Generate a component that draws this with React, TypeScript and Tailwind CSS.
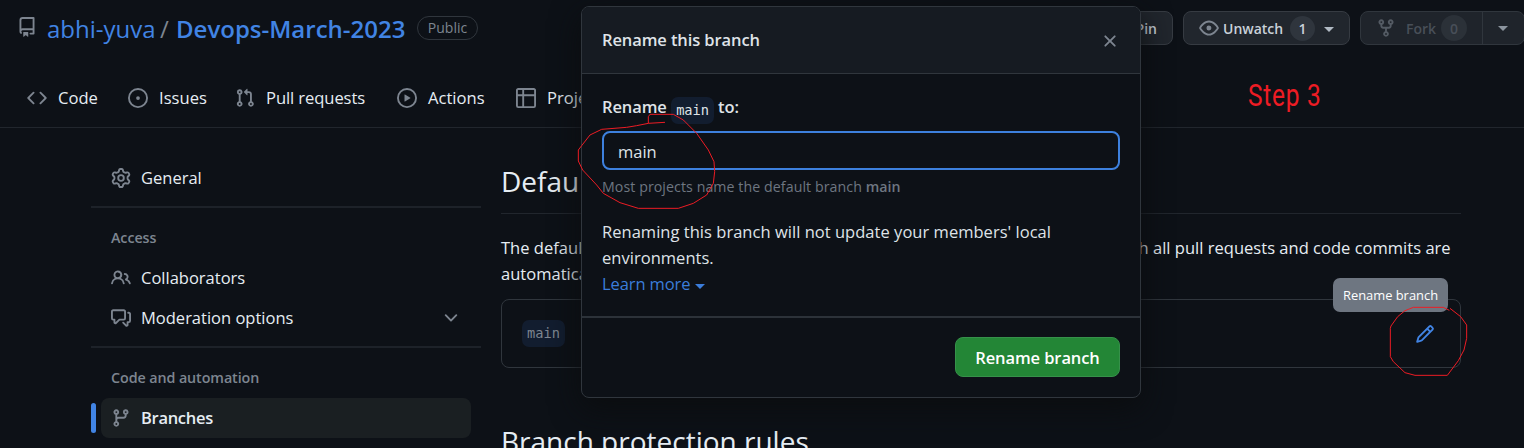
import type { ReactNode } from 'react';

const ICONS = {
  repo: 'M2 2.5A2.5 2.5 0 0 1 4.5 0h8.75a.75.75 0 0 1 .75.75v12.5a.75.75 0 0 1-.75.75h-2.5a.75.75 0 0 1 0-1.5h1.75v-2h-8a1 1 0 0 0-.714 1.7.75.75 0 1 1-1.072 1.05A2.495 2.495 0 0 1 2 11.5Zm10.5-1h-8a1 1 0 0 0-1 1v6.708A2.486 2.486 0 0 1 4.5 9h8ZM5 12.25a.25.25 0 0 1 .25-.25h3.5a.25.25 0 0 1 .25.25v3.25a.25.25 0 0 1-.4.2l-1.45-1.087a.249.249 0 0 0-.3 0L5.4 15.7a.25.25 0 0 1-.4-.2Z',
  code: 'm11.28 3.22 4.25 4.25a.75.75 0 0 1 0 1.06l-4.25 4.25a.749.749 0 0 1-1.275-.326.749.749 0 0 1 .215-.734L13.94 8l-3.72-3.72a.749.749 0 0 1 .326-1.275.749.749 0 0 1 .734.215Zm-6.56 0a.751.751 0 0 1 1.042.018.751.751 0 0 1 .018 1.042L2.06 8l3.72 3.72a.749.749 0 0 1-.326 1.275.749.749 0 0 1-.734-.215L.47 8.53a.75.75 0 0 1 0-1.06Z',
  issue: 'M8 9.5a1.5 1.5 0 1 0 0-3 1.5 1.5 0 0 0 0 3ZM8 0a8 8 0 1 1 0 16A8 8 0 0 1 8 0ZM1.5 8a6.5 6.5 0 1 0 13 0 6.5 6.5 0 0 0-13 0Z',
  pull: 'M1.5 3.25a2.25 2.25 0 1 1 3 2.122v5.256a2.251 2.251 0 1 1-1.5 0V5.372A2.25 2.25 0 0 1 1.5 3.25Zm5.677-.177L9.573.677A.25.25 0 0 1 10 .854V2.5h1A2.5 2.5 0 0 1 13.5 5v5.628a2.251 2.251 0 1 1-1.5 0V5a1 1 0 0 0-1-1h-1v1.646a.25.25 0 0 1-.427.177L7.177 3.427a.25.25 0 0 1 0-.354ZM3.75 2.5a.75.75 0 1 0 0 1.5.75.75 0 0 0 0-1.5Zm0 9.5a.75.75 0 1 0 0 1.5.75.75 0 0 0 0-1.5Zm8.25.75a.75.75 0 1 0 1.5 0 .75.75 0 0 0-1.5 0Z',
  play: 'M8 0a8 8 0 1 1 0 16A8 8 0 0 1 8 0ZM1.5 8a6.5 6.5 0 1 0 13 0 6.5 6.5 0 0 0-13 0Zm4.879-2.773 4.264 2.559a.25.25 0 0 1 0 .428l-4.264 2.559A.25.25 0 0 1 6 10.559V5.442a.25.25 0 0 1 .379-.215Z',
  table: 'M0 1.75C0 .784.784 0 1.75 0h12.5C15.216 0 16 .784 16 1.75v12.5A1.75 1.75 0 0 1 14.25 16H1.75A1.75 1.75 0 0 1 0 14.25ZM6.5 6.5v8h7.75a.25.25 0 0 0 .25-.25V6.5Zm8-1.5V1.75a.25.25 0 0 0-.25-.25H6.5V5Zm-13 1.5v7.75c0 .138.112.25.25.25H5v-8ZM5 5V1.5H1.75a.25.25 0 0 0-.25.25V5Z',
  eye: 'M8 2c1.981 0 3.671.992 4.933 2.078 1.27 1.091 2.187 2.345 2.637 3.023a1.62 1.62 0 0 1 0 1.798c-.45.678-1.367 1.932-2.637 3.023C11.67 13.008 9.981 14 8 14c-1.981 0-3.671-.992-4.933-2.078C1.797 10.83.88 9.576.43 8.898a1.62 1.62 0 0 1 0-1.798c.45-.677 1.367-1.931 2.637-3.022C4.33 2.992 6.019 2 8 2ZM1.679 7.932a.12.12 0 0 0 0 .136c.411.622 1.241 1.75 2.366 2.717C5.176 11.758 6.527 12.5 8 12.5c1.473 0 2.825-.742 3.955-1.715 1.124-.967 1.954-2.096 2.366-2.717a.12.12 0 0 0 0-.136c-.412-.621-1.242-1.75-2.366-2.717C10.824 4.242 9.473 3.5 8 3.5c-1.473 0-2.825.742-3.955 1.715-1.124.967-1.954 2.096-2.366 2.717ZM8 10a2 2 0 1 1-.001-3.999A2 2 0 0 1 8 10Z',
  fork: 'M5 5.372v.878c0 .414.336.75.75.75h4.5a.75.75 0 0 0 .75-.75v-.878a2.25 2.25 0 1 1 1.5 0v.878a2.25 2.25 0 0 1-2.25 2.25h-1.5v2.128a2.251 2.251 0 1 1-1.5 0V8.5h-1.5A2.25 2.25 0 0 1 3.5 6.25v-.878a2.25 2.25 0 1 1 1.5 0ZM5 3.25a.75.75 0 1 0-1.5 0 .75.75 0 0 0 1.5 0Zm6.75.75a.75.75 0 1 0 0-1.5.75.75 0 0 0 0 1.5Zm-3 8.75a.75.75 0 1 0-1.5 0 .75.75 0 0 0 1.5 0Z',
  gear: 'M8 0a8.2 8.2 0 0 1 .701.031C9.444.095 9.99.645 10.16 1.29l.288 1.107c.018.066.079.158.212.224.231.114.454.243.668.386.123.082.233.09.299.071l1.103-.303c.644-.176 1.392.021 1.82.63.27.385.506.792.704 1.218.315.675.111 1.422-.364 1.891l-.814.806c-.049.048-.098.147-.088.294.016.257.016.515 0 .772-.01.147.038.246.088.294l.814.806c.475.469.679 1.216.364 1.891a7.977 7.977 0 0 1-.704 1.217c-.428.61-1.176.807-1.82.63l-1.102-.302c-.067-.019-.177-.011-.3.071a5.909 5.909 0 0 1-.668.386c-.133.066-.194.158-.211.224l-.29 1.106c-.168.646-.715 1.196-1.458 1.26a8.006 8.006 0 0 1-1.402 0c-.743-.064-1.289-.614-1.458-1.26l-.289-1.106c-.018-.066-.079-.158-.212-.224a5.738 5.738 0 0 1-.668-.386c-.123-.082-.233-.09-.299-.071l-1.103.303c-.644.176-1.392-.021-1.82-.63a8.12 8.12 0 0 1-.704-1.218c-.315-.675-.111-1.422.363-1.891l.815-.806c.05-.048.098-.147.088-.294a6.214 6.214 0 0 1 0-.772c.01-.147-.038-.246-.088-.294l-.815-.806C.635 6.045.431 5.298.746 4.623a7.92 7.92 0 0 1 .704-1.217c.428-.61 1.176-.807 1.82-.63l1.102.302c.067.019.177.011.3-.071.214-.143.437-.272.668-.386.133-.066.194-.158.211-.224l.29-1.106C6.009.645 6.556.095 7.299.03 7.53.01 7.764 0 8 0Zm-.571 1.525c-.036.003-.108.036-.137.146l-.289 1.105c-.147.561-.549.967-.998 1.189-.173.086-.34.183-.5.29-.417.278-.97.423-1.529.27l-1.103-.303c-.109-.03-.175.016-.195.045-.22.312-.412.644-.573.99-.014.031-.021.11.059.19l.815.806c.411.406.562.957.53 1.456a4.709 4.709 0 0 0 0 .582c.032.499-.119 1.05-.53 1.456l-.815.806c-.081.08-.073.159-.059.19.162.346.353.677.573.989.02.03.085.076.195.046l1.102-.303c.56-.153 1.113-.008 1.53.27.161.107.328.204.501.29.447.222.85.629.997 1.189l.289 1.105c.029.109.101.143.137.146a6.6 6.6 0 0 0 1.142 0c.036-.003.108-.036.137-.146l.289-1.105c.147-.561.549-.967.998-1.189.173-.086.34-.183.5-.29.417-.278.97-.423 1.529-.27l1.103.303c.109.029.175-.016.195-.045.22-.313.411-.644.573-.99.014-.031.021-.11-.059-.19l-.815-.806c-.411-.406-.562-.957-.53-1.456a4.709 4.709 0 0 0 0-.582c-.032-.499.119-1.05.53-1.456l.815-.806c.081-.08.073-.159.059-.19a6.464 6.464 0 0 0-.573-.989c-.02-.03-.085-.076-.195-.046l-1.102.303c-.56.153-1.113.008-1.53-.27a4.44 4.44 0 0 0-.501-.29c-.447-.222-.85-.629-.997-1.189l-.289-1.105c-.029-.11-.101-.143-.137-.146a6.6 6.6 0 0 0-1.142 0ZM11 8a3 3 0 1 1-6 0 3 3 0 0 1 6 0ZM9.5 8a1.5 1.5 0 1 0-3.001.001A1.5 1.5 0 0 0 9.5 8Z',
  people: 'M2 5.5a3.5 3.5 0 1 1 5.898 2.549 5.508 5.508 0 0 1 3.034 4.084.75.75 0 1 1-1.482.235 4 4 0 0 0-7.9 0 .75.75 0 0 1-1.482-.236A5.507 5.507 0 0 1 3.102 8.05 3.493 3.493 0 0 1 2 5.5ZM11 4a3.001 3.001 0 0 1 2.22 5.018 5.01 5.01 0 0 1 2.56 3.012.749.749 0 0 1-.885.954.752.752 0 0 1-.549-.514 3.507 3.507 0 0 0-2.522-2.372.75.75 0 0 1-.574-.73v-.352a.75.75 0 0 1 .416-.672A1.5 1.5 0 0 0 11 5.5.75.75 0 0 1 11 4Zm-5.5-.5a2 2 0 1 0-.001 3.999A2 2 0 0 0 5.5 3.5Z',
  discussion: 'M1.75 1h8.5c.966 0 1.75.784 1.75 1.75v5.5A1.75 1.75 0 0 1 10.25 10H7.061l-2.574 2.573A1.458 1.458 0 0 1 2 11.543V10h-.25A1.75 1.75 0 0 1 0 8.25v-5.5C0 1.784.784 1 1.75 1ZM1.5 2.75v5.5c0 .138.112.25.25.25h1a.75.75 0 0 1 .75.75v2.19l2.72-2.72a.749.749 0 0 1 .53-.22h3.5a.25.25 0 0 0 .25-.25v-5.5a.25.25 0 0 0-.25-.25h-8.5a.25.25 0 0 0-.25.25Zm13 2a.25.25 0 0 0-.25-.25h-.5a.75.75 0 0 1 0-1.5h.5c.966 0 1.75.784 1.75 1.75v5.5A1.75 1.75 0 0 1 14.25 12H14v1.543a1.458 1.458 0 0 1-2.487 1.03L9.22 12.28a.749.749 0 0 1 .326-1.275.749.749 0 0 1 .734.215l2.22 2.22v-2.19a.75.75 0 0 1 .75-.75h1a.25.25 0 0 0 .25-.25Z',
  chevron: 'M12.78 5.22a.749.749 0 0 1 0 1.06l-4.25 4.25a.749.749 0 0 1-1.06 0L3.22 6.28a.749.749 0 1 1 1.06-1.06L8 8.939l3.72-3.719a.749.749 0 0 1 1.06 0Z',
  branch: 'M9.5 3.25a2.25 2.25 0 1 1 3 2.122V6A2.5 2.5 0 0 1 10 8.5H6a1 1 0 0 0-1 1v1.128a2.251 2.251 0 1 1-1.5 0V5.372a2.25 2.25 0 1 1 1.5 0v1.836A2.493 2.493 0 0 1 6 7h4a1 1 0 0 0 1-1v-.628A2.25 2.25 0 0 1 9.5 3.25Zm-6 0a.75.75 0 1 0 1.5 0 .75.75 0 0 0-1.5 0Zm8.25-.75a.75.75 0 1 0 0 1.5.75.75 0 0 0 0-1.5ZM4.25 12a.75.75 0 1 0 0 1.5.75.75 0 0 0 0-1.5Z',
  pencil: 'M11.013 1.427a1.75 1.75 0 0 1 2.474 0l1.086 1.086a1.75 1.75 0 0 1 0 2.474l-8.61 8.61c-.21.21-.47.364-.756.445l-3.251.93a.75.75 0 0 1-.927-.928l.929-3.25c.081-.286.235-.547.445-.758l8.61-8.61Zm.176 4.823L9.75 4.81l-6.286 6.287a.253.253 0 0 0-.064.108l-.558 1.953 1.953-.558a.253.253 0 0 0 .108-.064Zm1.238-3.763a.25.25 0 0 0-.354 0L10.811 3.75l1.439 1.44 1.263-1.263a.25.25 0 0 0 0-.354Z',
  close: 'M3.72 3.72a.75.75 0 0 1 1.06 0L8 6.94l3.22-3.22a.749.749 0 0 1 1.275.326.749.749 0 0 1-.215.734L9.06 8l3.22 3.22a.749.749 0 0 1-.326 1.275.749.749 0 0 1-.734-.215L8 9.06l-3.22 3.22a.751.751 0 0 1-1.042-.018.751.751 0 0 1-.018-1.042L6.94 8 3.72 4.78a.75.75 0 0 1 0-1.06Z',
};

type IconName = keyof typeof ICONS;

function Icon({ name, className = 'text-[#7d8590]' }: { name: IconName; className?: string }) {
  return (
    <svg viewBox="0 0 16 16" className={`size-5 shrink-0 fill-current ${className}`} aria-hidden="true">
      <path d={ICONS[name]} />
    </svg>
  );
}

function Caret({ className = '' }: { className?: string }) {
  return (
    <svg viewBox="0 0 10 5" className={`h-[5px] w-[10px] shrink-0 fill-current ${className}`} aria-hidden="true">
      <path d="M0 0h10L5 5z" />
    </svg>
  );
}

function NavItem({ icon, label, className }: { icon: IconName; label: string; className: string }) {
  return (
    <a className={`flex shrink-0 items-center gap-[11px] ${className}`}>
      <Icon name={icon} />
      <span className="pt-px whitespace-nowrap">{label}</span>
    </a>
  );
}

function SideItem({ icon, label, children }: { icon: IconName; label: string; children?: ReactNode }) {
  return (
    <div className="flex h-10 items-center gap-2.5 pr-5 pl-5">
      <Icon name={icon} />
      <span className="grow">{label}</span>
      {children}
    </div>
  );
}

function SideHeading({ children }: { children: ReactNode }) {
  return (
    <div className="flex h-10 items-center pl-5 text-[14.3px] font-semibold tracking-[-0.08px] text-[#7d8590]">
      {children}
    </div>
  );
}

function BranchName({ className }: { className: string }) {
  return (
    <code
      className={`inline-flex h-[27px] w-[43px] items-center justify-center rounded-[7px] bg-[#121d2f] font-['DejaVu_Sans_Mono',monospace] text-[13.7px] font-normal ${className}`}
    >
      main
    </code>
  );
}

function Header() {
  return (
    <header className="h-32 border-b border-[#21262d]">
      <div className="flex h-14 items-center pl-[17px]">
        <Icon name="repo" className="-mt-0.5 text-[#7d8590]" />
        <div className="ml-[10px] flex items-center pt-0.5 text-[24px] text-[#4184e4]">
          <span className="w-[113px] whitespace-nowrap">abhi-yuva</span>
          <span className="w-4 text-[#7d8590]">/</span>
          <span className="w-[241px] whitespace-nowrap font-semibold">Devops-March-2023</span>
        </div>
        <span className="-mt-px flex h-6 w-[61px] items-center justify-center rounded-full border border-[#30363d] text-[14px] font-medium text-[#7d8590]">
          Public
        </span>
        <div className="-mr-px ml-auto flex text-[14px] font-semibold text-[#c9d1d9]">
          <div className="flex h-[34px] w-[100px] items-center justify-end rounded-lg border border-[#363b42] bg-[#21262d] pr-[15px]">
            Pin
          </div>
          <div className="ml-2.5 flex h-[34px] w-[167px] items-center rounded-lg border border-[#363b42] bg-[#21262d] pl-[15px]">
            <Icon name="eye" />
            <span className="ml-1 w-[67px]">Unwatch</span>
            <span className="flex size-[25px] items-center justify-center rounded-full bg-[#2f353d]">1</span>
            <Caret className="mt-[3px] ml-[9px] text-[#b1bac4]" />
          </div>
          <div className="ml-2.5 flex h-[34px] w-[165px] items-center rounded-lg border border-[#30363d] bg-[#1f242b] pl-[15px] text-[#484f58]">
            <Icon name="fork" className="text-[#545b64]" />
            <span className="ml-[10px] w-[35px]">Fork</span>
            <span className="flex size-[26px] items-center justify-center rounded-full bg-[#2b3138]">0</span>
            <span className="ml-[15px] flex h-full w-[41px] items-center justify-center border-l border-[#30363d]">
              <Caret className="text-[#8b949e]" />
            </span>
          </div>
        </div>
      </div>
      <nav className="flex h-[84px] items-center pl-[27px] text-[16.6px] text-[#e6edf3]">
        <NavItem icon="code" label="Code" className="w-[101px]" />
        <NavItem icon="issue" label="Issues" className="w-[107px]" />
        <NavItem icon="pull" label="Pull requests" className="w-[162px] tracking-[-0.1px]" />
        <NavItem icon="play" label="Actions" className="w-[119px]" />
        <NavItem icon="table" label="Projects" className="w-[119px]" />
      </nav>
    </header>
  );
}

function Sidebar() {
  return (
    <aside className="flex w-[390px] shrink-0 flex-col pt-[30px] text-[16.5px] text-[#e6edf3]">
      <SideItem icon="gear" label="General" />
      <hr className="mt-2 mb-[10px] border-t-2 border-[#1d2229]" />
      <SideHeading>Access</SideHeading>
      <SideItem icon="people" label="Collaborators" />
      <SideItem icon="discussion" label="Moderation options">
        <Icon name="chevron" />
      </SideItem>
      <hr className="mt-2 mb-[10px] border-t-2 border-[#1d2229]" />
      <SideHeading>Code and automation</SideHeading>
      <div className="flex h-10 items-center gap-[5px] pr-[10px]">
        <span className="h-[30px] w-[5px] rounded-full bg-[#4184e4]" />
        <div className="flex h-10 grow items-center gap-2.5 rounded-lg bg-[#1a1f22] pl-[10px] font-semibold tracking-[-0.3px]">
          <Icon name="branch" />
          <span>Branches</span>
        </div>
      </div>
    </aside>
  );
}

function Content() {
  return (
    <main className="ml-5 flex w-[960px] shrink-0 flex-col text-[#e6edf3]">
      <h2 className="h-[86px] border-b border-[#21262d] pt-8 text-[28px] leading-[42px]">Default branch</h2>
      <p className="mt-[21px] text-[16.5px] leading-[26px] tracking-[0.02px] whitespace-nowrap">
        The default branch is considered the “base” branch in your repository, against which all pull requests and code commits are
        <br />
        automatically made, unless you specify a different branch.
      </p>
      <div className="relative mt-[12px] flex h-[69px] items-center justify-between rounded-lg border border-[#30363d] pr-[25px] pl-5">
        <BranchName className="text-[#7d8590]" />
        <Icon name="pencil" className="text-[#4184e4]" />
        <div className="absolute -top-[22px] right-3 flex h-[34px] w-[115px] items-center justify-center rounded-[7px] bg-[#6e7681] pt-0.5 text-[12.9px] text-white">
          Rename branch
        </div>
      </div>
      <h2 className="mt-[52px] text-[28px] leading-[42px] whitespace-nowrap">Branch protection rules</h2>
    </main>
  );
}

function RenameDialog() {
  return (
    <section className="absolute top-1.5 left-[581px] flex h-[392px] w-[560px] flex-col overflow-hidden rounded-lg border border-[#30363d] bg-[#0d1117] text-[16.5px] text-[#dfe3e8] shadow-[0_10px_30px_#0b0d0f]">
      <div className="flex h-[67px] items-center justify-between border-b border-[#30363d] bg-[#161b22] pt-px pr-5 pl-5 font-semibold tracking-[-0.1px]">
        <span>Rename this branch</span>
        <Icon name="close" />
      </div>
      <div className="flex h-[242px] flex-col px-5 pt-[22px]">
        <label className="flex h-7 items-center font-semibold tracking-[-0.1px]">
          <span className="-mt-[5px] w-[69px]">Rename</span>
          <BranchName className="text-[#dfe3e8]" />
          <span className="-mt-[5px] ml-[4px]">to:</span>
        </label>
        <div className="mt-[7px] flex h-[39px] shrink-0 items-center rounded-lg border-2 border-[#3d80de] bg-[#0d1117] pt-[3px] pl-[14px]">
          main
        </div>
        <p className="mt-[6px] text-[14.2px] leading-[22px] tracking-[0.07px] text-[#6e7681]">
          Most projects name the default branch <b className="font-semibold">main</b>
        </p>
        <p className="mt-[21px] leading-[26px] tracking-[0.03px]">
          Renaming this branch will not update your members' local environments.
        </p>
        <a className="flex items-center gap-[5px] leading-[26px] tracking-[-0.1px] text-[#3b7ddb]">
          Learn more <Caret className="mt-1" />
        </a>
      </div>
      <div className="flex grow items-start justify-end border-t-2 border-[#2c3239] pt-[19px] pr-5">
        <button className="h-10 w-[165px] rounded-lg border border-[#36914a] bg-[#238636] pt-0.5 font-semibold tracking-[-0.1px] text-white">
          Rename branch
        </button>
      </div>
    </section>
  );
}

function Annotations() {
  return (
    <>
      <span className="absolute top-[77px] left-[1248px] origin-left scale-x-[0.79] font-['Roboto',sans-serif] text-[31px] leading-[38px] tracking-[0.9px] whitespace-nowrap text-[#ed1c24]">
        Step 3
      </span>
      <svg
        viewBox="0 0 1524 448"
        className="pointer-events-none absolute inset-0 h-[448px] w-[1524px] fill-none stroke-[#ed1c24]"
        aria-hidden="true"
      >
        <path
          transform="translate(560 0) scale(.33333)"
          strokeWidth="3"
          d="M315 367L265 370L230 377L200 382L125 388L90 405L65 437L55 450V483L68 510L110 555L130 580L180 608L235 625H355L400 610L440 585L460 550L464 515L462 485L445 450L410 400L370 360L340 343H270L265 350V370"
        />
        <path
          transform="translate(1130 200) scale(.33333)"
          strokeWidth="3"
          d="M958 331L940 322H850L825 332L803 350L783 378L781 385V470L790 485L825 518L855 526H952L985 482L1002 450L1010 415V375L992 350L960 325"
        />
      </svg>
    </>
  );
}

export default function App() {
  return (
    <div className="relative h-[448px] w-[1524px] overflow-hidden bg-[#0d1117] font-['Open_Sans','Noto_Sans',sans-serif]">
      <Header />
      <div className="flex pl-[91px]">
        <Sidebar />
        <Content />
      </div>
      <RenameDialog />
      <Annotations />
    </div>
  );
}
